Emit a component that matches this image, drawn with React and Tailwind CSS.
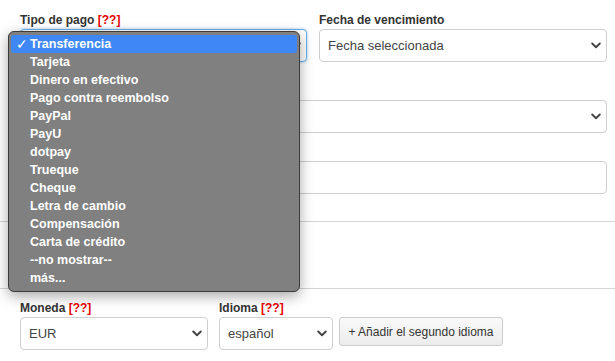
// Invoice form with native select popup open

const OPTIONS = [
  'Transferencia',
  'Tarjeta',
  'Dinero en efectivo',
  'Pago contra reembolso',
  'PayPal',
  'PayU',
  'dotpay',
  'Trueque',
  'Cheque',
  'Letra de cambio',
  'Compensación',
  'Carta de crédito',
  '--no mostrar--',
  'más...',
]

const font = { fontFamily: '"Liberation Sans", Arial, sans-serif' }

function Chevron() {
  return (
    <svg width="10" height="7" viewBox="0 0 10 7" className="shrink-0">
      <path d="M1.2 1.5 5 5.2 8.8 1.5" fill="none" stroke="#444" strokeWidth="1.9" strokeLinecap="round" strokeLinejoin="round" />
    </svg>
  )
}

function Label({ text, flag }) {
  return (
    <div className="h-[14px] mb-[2px] text-[12px] leading-[14px] font-bold text-[#333]">
      {text} {flag && <span className="text-[#e60000]">[??]</span>}
    </div>
  )
}

function Select({ value, focus, className = '' }) {
  return (
    <div className={`h-[33px] flex items-center justify-between pl-[8px] pr-[5px] rounded-[4px] border bg-white text-[13px] text-[#444] ${focus ? 'border-[#66afe9] shadow-[0_0_3px_rgba(102,175,233,0.6)]' : 'border-[#cfcfcf]'} ${className}`}>
      <span>{value}</span>
      <Chevron />
    </div>
  )
}

function Popup() {
  return (
    <div className="absolute left-[8px] top-[31px] w-[292px] h-[261px] rounded-[6px] border border-[#3c3c3c] bg-[#808080] pt-[3px] px-[2px] shadow-[0_4px_14px_rgba(0,0,0,0.35)]" style={font}>
      {OPTIONS.map((o, i) => (
        <div key={o} className={`h-[18px] flex items-center rounded-[3px] text-[12.5px] font-bold text-white ${i === 0 ? 'bg-[#3f87f5]' : ''}`}>
          <span className="w-[19px] pl-[5px] text-[14px] font-normal">{i === 0 ? '✓' : ''}</span>
          <span>{o}</span>
        </div>
      ))}
    </div>
  )
}

export default function App() {
  return (
    <div className="relative w-[615px] h-[361px] bg-white overflow-hidden" style={font}>
      <div className="pl-[20px] pr-[8px] pt-[13px]">
        <div className="grid grid-cols-[287px_288px] gap-x-[12px]">
          <div>
            <Label text="Tipo de pago" flag />
            <Select value="" focus />
          </div>
          <div>
            <Label text="Fecha de vencimiento" />
            <Select value="Fecha seleccionada" />
          </div>
        </div>

        {/* fields behind the popup, labels hidden by it */}
        <div className="mt-[22px]">
          <div className="h-[16px]" />
          <Select value="" />
        </div>

        <div className="mt-[12px]">
          <div className="h-[16px]" />
          <div className="h-[33px] rounded-[4px] border border-[#cfcfcf] bg-white" />
        </div>
      </div>

      <div className="mt-[27px] h-px bg-[#d4d4d4]" />
      <div className="h-[66px]" />
      <div className="h-px bg-[#d4d4d4]" />

      <div className="pl-[20px] pt-[12px] flex gap-[11px]">
        <div className="w-[188px]">
          <Label text="Moneda" flag />
          <Select value="EUR" />
        </div>
        <div className="flex gap-[6px]">
          <div className="w-[114px]">
            <Label text="Idioma" flag />
            <Select value="español" />
          </div>
          <button className="self-end mb-[4px] h-[29px] w-[164px] rounded-[3px] border border-[#cccccc] bg-[linear-gradient(#fafafa,#ececec)] text-[12px] text-[#333]">
            + Añadir el segundo idioma
          </button>
        </div>
      </div>

      <Popup />
    </div>
  )
}
